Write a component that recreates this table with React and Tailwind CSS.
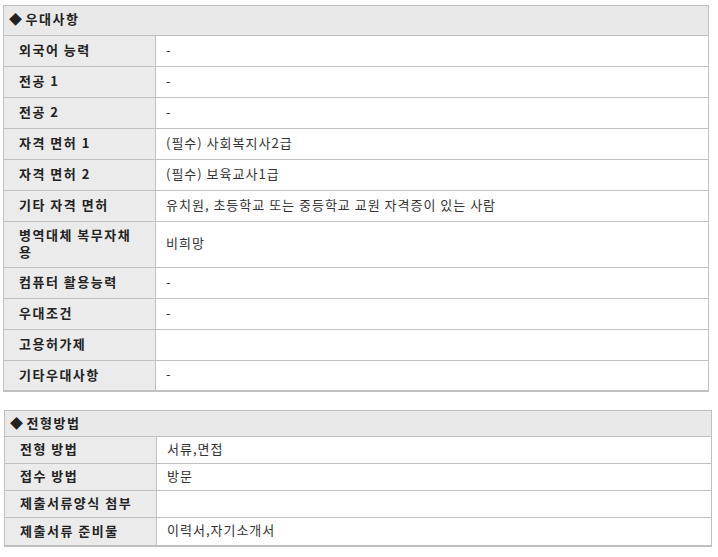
import React from "react";

const font = { fontFamily: '"Noto Sans CJK KR", "Noto Sans", sans-serif' };

function Row({ label, value, last, tall, h }) {
  return (
    <div className={`flex ${last ? "border-b-2" : "border-b"} border-[#c0c0c0]`}>
      <div className={`w-[152px] shrink-0 bg-[#ebebeb] border-r border-[#c0c0c0] pl-[15px] pr-2 pb-[3px] flex items-center font-bold text-[13px] leading-[17px] tracking-[1.5px] text-[#222] ${h}`}>
        <span className={tall ? "w-[124px] break-all" : ""}>{label}</span>
      </div>
      <div className={`flex-1 bg-white pl-[10px] pb-[3px] flex items-center text-[13px] tracking-[1px] text-[#333] ${h}`}>
        {value}
      </div>
    </div>
  );
}

export default function App() {
  const t1 = [
    ["외국어 능력", "-"],
    ["전공 1", "-"],
    ["전공 2", "-"],
    ["자격 면허 1", "(필수) 사회복지사2급"],
    ["자격 면허 2", "(필수) 보육교사1급"],
    ["기타 자격 면허", "유치원, 초등학교 또는 중등학교 교원 자격증이 있는 사람"],
    ["병역대체 복무자채용", "비희망", true],
    ["컴퓨터 활용능력", "-"],
    ["우대조건", "-"],
    ["고용허가제", ""],
    ["기타우대사항", "-"],
  ];
  const t2 = [
    ["전형 방법", "서류,면접"],
    ["접수 방법", "방문"],
    ["제출서류양식 첨부", ""],
    ["제출서류 준비물", "이력서,자기소개서"],
  ];
  return (
    <div className="bg-white w-[718px] h-[557px] pt-[5px]" style={font}>
      <div className="ml-[3px] w-[706px] border-l border-r border-t border-[#c0c0c0]">
        <div className="h-[30px] bg-[#e9e9e9] border-b border-[#c0c0c0] flex items-center pl-[5px] pb-[3px] font-bold text-[13px] tracking-[1.5px] text-[#222]">
          <span className="mr-[2px]">◆</span>우대사항
        </div>
        {t1.map(([l, v, tall], i) => (
          <Row
            key={i}
            label={l}
            value={v}
            tall={tall}
            last={i === t1.length - 1}
            h={tall ? "h-[45px]" : i === t1.length - 1 ? "h-[29px]" : "h-[30px]"}
          />
        ))}
      </div>
      <div className="mt-[18px] ml-[4px] w-[708px] border-l border-r border-t border-[#c0c0c0]">
        <div className="h-[26px] bg-[#e9e9e9] border-b border-[#c0c0c0] flex items-center pl-[5px] pb-[2px] font-bold text-[13px] tracking-[1.5px] text-[#222]">
          <span className="mr-[2px]">◆</span>전형방법
        </div>
        {t2.map(([l, v], i) => (
          <Row
            key={i}
            label={l}
            value={v}
            last={i === t2.length - 1}
            h={i === t2.length - 1 ? "h-[27px]" : "h-[26px]"}
          />
        ))}
      </div>
    </div>
  );
}
